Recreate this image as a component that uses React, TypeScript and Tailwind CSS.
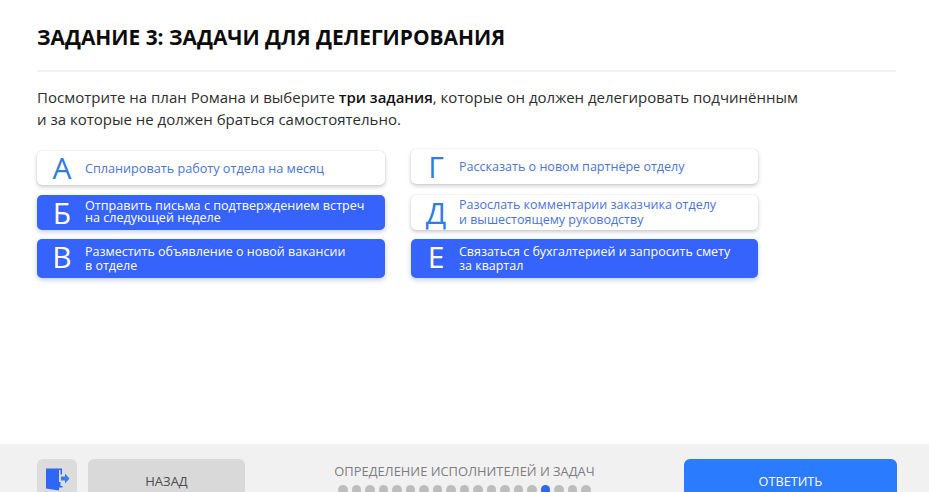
const font = { fontFamily: '"Open Sans", "Noto Sans", sans-serif' };

function Option({ letter, lines, active, h, text, letterShift = '' }: { letter: string; lines: string[]; active?: boolean; h: string; text: string; letterShift?: string }) {
  return (
    <div className={`flex items-center rounded-[5px] ${h} ${active ? 'bg-[#3563fb] text-white shadow-[0_2px_5px_rgba(60,90,180,0.3)]' : 'bg-white text-[#4a74dc] shadow-[0_0_1px_rgba(0,0,0,0.2),0_2px_4px_rgba(0,0,0,0.2)]'}`}>
      <span className={`w-[48px] shrink-0 pl-[2px] text-center text-[30px] leading-none ${letterShift} ${active ? 'text-white' : 'font-medium text-[#2f7de1]'}`}>{letter}</span>
      <div className={text}>
        {lines.map((l) => (
          <div key={l}>{l}</div>
        ))}
      </div>
    </div>
  );
}

export default function App() {
  const dots = Array.from({ length: 19 }, (_, i) => i);
  return (
    <div style={font} className="flex h-[492px] w-[929px] flex-col overflow-hidden bg-white">
      <main className="flex h-[444px] flex-col px-[37px]">
        <h1 className="mt-[22px] h-[30px] text-[20.9px] font-bold leading-[30px] text-[#0c0c0c]">ЗАДАНИЕ 3: ЗАДАЧИ ДЛЯ ДЕЛЕГИРОВАНИЯ</h1>
        <div className="mt-[18px] h-[2px] w-[859px] bg-[#f2f2f2]" />
        <p className="mt-[14px] text-[15px] leading-[22px] text-[#2e2e2e]">
          Посмотрите на план Романа и выберите <b className="font-semibold text-[#111]">три задания</b>, которые он должен делегировать подчинённым
          <br />и за которые не должен браться самостоятельно.
        </p>
        <div className="mt-[19px] flex gap-[26px]">
          <div className="flex w-[348px] flex-col pt-[2px]">
            <Option h="h-[34px]" text="text-[12.65px] leading-[14px]" letter="А" lines={['Спланировать работу отдела на месяц']} />
            <div className="mt-[10px]"><Option h="h-[35px]" active text="-mt-[1px] text-[12.6px] leading-[12px]" letter="Б" lines={['Отправить письма с подтверждением встреч', 'на следующей неделе']} /></div>
            <div className="mt-[9px]"><Option h="h-[39px]" active letterShift="-mt-[3px]" text="pt-[1px] text-[12.5px] leading-[14px]" letter="В" lines={['Разместить объявление о новой вакансии', 'в отделе']} /></div>
          </div>
          <div className="flex w-[347px] flex-col">
            <Option h="h-[35px]" text="pt-[1px] text-[12.55px] leading-[14px]" letter="Г" lines={['Рассказать о новом партнёре отделу']} />
            <div className="mt-[11px]"><Option h="h-[35px]" text="-mt-[1px] text-[12.5px] leading-[15px]" letter="Д" lines={['Разослать комментарии заказчика отделу', 'и вышестоящему руководству']} /></div>
            <div className="mt-[9px]"><Option h="h-[39px]" active letterShift="-mt-[3px]" text="pt-[1px] text-[12.47px] leading-[14px]" letter="Е" lines={['Связаться с бухгалтерией и запросить смету', 'за квартал']} /></div>
          </div>
        </div>
      </main>
      <footer className="flex h-[48px] items-start bg-[#f1f1f1] pl-[37px] pt-[15px]">
        <div className="flex h-[50px] w-[40px] shrink-0 justify-center rounded-[6px] bg-[#dcdcdc] pt-[8px]">
          <svg width="26" height="26" viewBox="0 0 26 26">
            <path d="M2 1.500h13v22l-13-2z" fill="#2e66f5" />
            <path d="M15 1.500h3v6h-1.500v-4.500h-1.500z M15 15h1.500v4h2v1.500h-3.500z" fill="#2e66f5" />
            <path d="M17 9.500h4v-3l4.500 5-4.500 5v-3h-4z" fill="#3d7cf0" />
          </svg>
        </div>
        <div className="ml-[11px] flex h-[50px] w-[157px] shrink-0 justify-center rounded-[6px] bg-[#d9d9d9] pt-[12px] text-[13px] leading-[20px] text-[#4d4d4d]">НАЗАД</div>
        <div className="flex w-[439px] shrink-0 flex-col items-center pt-[2px]">
          <div className="text-[12.9px] leading-[20px] text-[#7d7d7d]">ОПРЕДЕЛЕНИЕ ИСПОЛНИТЕЛЕЙ И ЗАДАЧ</div>
          <div className="mt-[4px] flex gap-[4px]">
            {dots.map((i) => (
              <span key={i} className={`h-[9.5px] w-[9.5px] rounded-full ${i === 15 ? 'bg-[#2e66f5]' : 'bg-[#bdbdbd]'}`} />
            ))}
          </div>
        </div>
        <div className="flex h-[50px] w-[213px] shrink-0 justify-center rounded-[6px] bg-[#2b7bff] pt-[12px] text-[12.7px] leading-[20px] text-white">ОТВЕТИТЬ</div>
      </footer>
    </div>
  );
}
